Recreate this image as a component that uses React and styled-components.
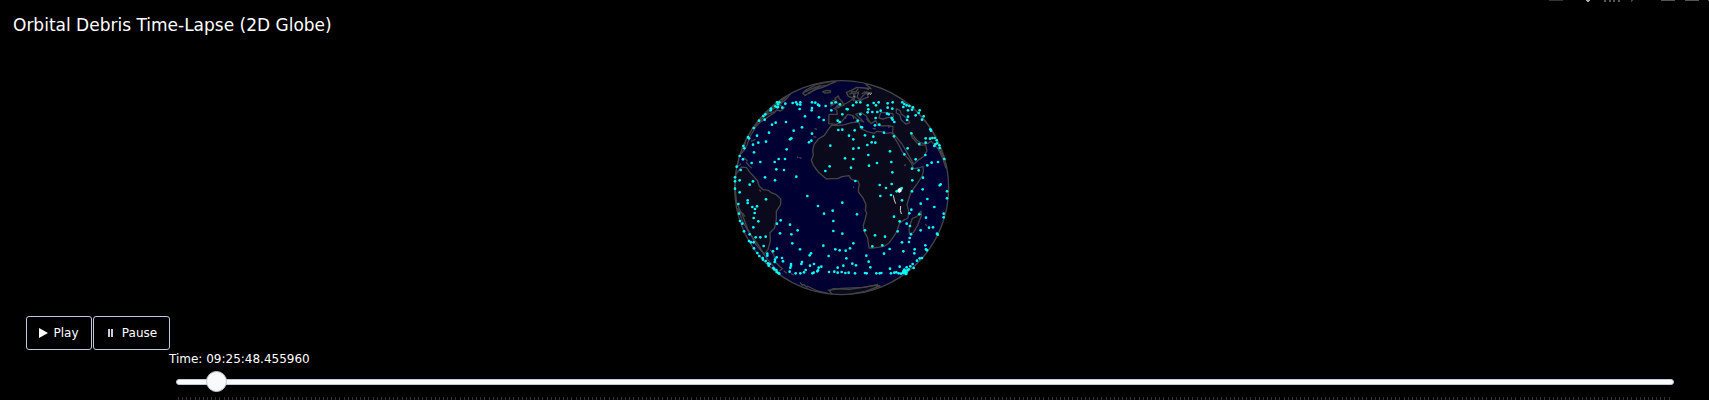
import React, { useState } from "react";
import styled, { createGlobalStyle } from "styled-components";

const GlobalStyle = createGlobalStyle`
  *, *::before, *::after { box-sizing: border-box; }
  body {
    margin: 0;
    background: #000;
    color: #fff;
    font-family: Verdana, "DejaVu Sans", sans-serif;
    overflow: hidden;
  }
`;

const Page = styled.main`
  position: relative;
  display: flex;
  flex-direction: column;
`;

const Title = styled.h1`
  margin: 0;
  padding: 13px 13px 0;
  font-size: 17px;
  line-height: 24px;
  font-weight: 400;
`;

const ModeBar = styled.svg`
  position: absolute;
  top: 0;
  right: 0;
`;

const GlobeArea = styled.section`
  display: flex;
  justify-content: center;
  padding: 41px 26px 0 0;
`;

const Controls = styled.div`
  display: flex;
  gap: 1px;
  padding: 18px 26px 0;
`;

const ControlButton = styled.button`
  display: flex;
  align-items: center;
  justify-content: center;
  gap: ${(p) => (p.$wide ? 9 : 5)}px;
  width: ${(p) => (p.$wide ? 77 : 66)}px;
  height: 34px;
  padding: ${(p) => (p.$wide ? "0 0 0 2px" : "0")};
  border: 1px solid #bec8d9;
  border-radius: 3px;
  background: #000;
  color: #fff;
  font-family: inherit;
  font-size: 12px;
  line-height: 16px;
  cursor: pointer;
`;

const Timeline = styled.div`
  display: flex;
  flex-direction: column;
  padding: 1px 34px 0 169px;
`;

const TimeLabel = styled.label`
  font-size: 12px;
  line-height: 16px;
`;

const Slider = styled.input`
  appearance: none;
  display: block;
  width: auto;
  height: 22px;
  margin: 4px 1px 0 7px;
  background: transparent;
  cursor: pointer;

  &::-webkit-slider-runnable-track {
    height: 6px;
    border: 1px solid #bec8d9;
    border-radius: 3px;
    background: #f8fafc;
  }

  &::-webkit-slider-thumb {
    appearance: none;
    width: 21px;
    height: 21px;
    margin-top: -9px;
    border: 1px solid #bec8d9;
    border-radius: 50%;
    background: #f8fafc;
  }
`;

const Ticks = styled.div`
  display: flex;
  justify-content: space-between;
  height: 3px;
  margin: 4px 3px 0 9px;
`;

const Tick = styled.span`
  width: 1px;
  height: 3px;
  background: #333;
`;

const land = [
  // Africa
  "M302 141 L290 157 L280 172 L262 183 L249 200 L245 218 L247 232 L241 246 L247 262 L262 282 L286 303 L300 302 L320 302 L333 296 L354 293 L360 303 L370 307 L381 309 L385 320 L382 334 L383 343 L396 360 L405 380 L403 398 L407 405 L402 425 L397 442 L398 457 L410 480 L414 510 L425 510 L440 508 L460 505 L475 494 L488 476 L498 460 L505 436 L518 427 L531 420 L533 400 L528 380 L534 360 L540 342 L556 321 L573 295 L577 280 L576 265 L563 270 L548 272 L541 255 L530 240 L514 221 L503 200 L490 178 L483 164 L465 166 L452 161 L438 160 L430 166 L409 161 L390 152 L386 139 L383 132 L362 134 L340 140 L320 143 Z",
  // Eurasia
  "M293 137 L294 109 L319 109 L317 96 L309 91 L323 89 L331 83 L347 75 L356 70 L367 62 L374 68 L390 67 L400 61 L412 57 L408 48 L421 43 L404 46 L396 53 L387 65 L378 58 L383 42 L370 48 L366 60 L352 55 L346 44 L360 37 L378 28 L400 30 L420 32 L400 14 L480 40 L550 90 L593 143 L622 190 L640 240 L632 235 L622 214 L610 200 L600 190 L592 196 L577 196 L566 193 L557 186 L549 176 L540 165 L543 177 L553 189 L565 202 L584 200 L588 218 L580 234 L565 244 L548 259 L535 235 L513 198 L494 175 L485 164 L486 145 L472 143 L457 144 L441 142 L434 128 L426 133 L420 137 L412 125 L406 114 L390 104 L374 109 L389 122 L398 132 L382 126 L366 113 L350 109 L342 119 L330 133 L316 139 Z",
  // South America
  "M24 276 L32 267 L47 269 L55 281 L67 294 L80 309 L85 325 L96 335 L112 337 L121 344 L136 350 L149 363 L149 379 L136 400 L136 424 L131 450 L117 464 L118 490 L111 515 L99 529 L75 500 L50 453 L34 410 L17 376 L12 329 L15 288 Z",
  // North America and Greenland
  "M144 80 L160 89 L149 99 L137 96 L129 105 L115 114 L101 124 L86 134 L75 146 L58 174 L48 201 L38 219 L26 231 L36 205 L60 157 L90 117 L124 84 L177 44 Z",
  "M215 46 L225 36 L254 20 L300 10 L315 11 L287 22 L267 25 L249 35 L236 45 L222 52 Z",
  // Antarctica
  "M303 649 L295 638 L307 632 L355 634 L410 626 L435 622 L447 624 L403 640 L350 650 Z",
  // Madagascar
  "M570 399 L571 413 L560 442 L547 464 L535 466 L534 450 L544 421 L557 416 Z",
  // Iceland, Great Britain and Ireland
  "M275 41 L287 37 L299 39 L297 44 L281 45 Z",
  "M312 61 L322 54 L325 62 L334 71 L338 82 L324 84 L314 88 L323 80 L317 72 Z",
  "M300 72 L310 66 L310 77 L300 84 Z",
];

const seas = [
  "M444 120 L449 104 L466 104 L485 107 L488 117 L469 119 L456 123 Z",
  "M496 92 L506 97 L511 108 L530 123 L536 134 L525 138 L511 126 L507 112 L496 104 Z",
];

const coastDetails = [
  "M60 190 L73 184 M40 239 L50 250 M45 252 L54 263 L62 270 M20 266 L30 257",
  "M85 335 L90 341 M22 399 L35 406 L42 416 M20 390 L35 431 L56 466 L84 504 L106 540 L144 584",
  "M118 515 L128 530 L135 554 L145 564 L154 572 L145 580 M158 578 L167 586 M180 586 L188 592",
  "M207 613 L214 622 L218 620 L230 628 M205 239 L212 241 M250 152 L258 154 M247 176 L256 178 M198 236 L202 239",
  "M66 153 L90 118 L118 98 L130 83 L160 60 L179 39 M120 98 L136 87 L160 69 L180 46 M84 132 L105 111 L130 101",
  "M25 230 L34 212 L44 194 M15 280 L24 242 M624 211 L637 246 L645 271 M630 218 L645 251 L652 290",
  "M340 118 L346 122 M364 111 L369 123 M372 130 L382 132 M406 122 L414 132 M425 151 L434 153 M471 147 L479 146",
  "M231 46 L255 34 L275 28 L292 21 M218 43 L245 31 L269 23 M360 41 L374 42 L382 32 M403 31 L414 35",
  "M355 49 L364 44 L371 51 L373 60 M392 48 L401 42 L414 43 M371 58 L367 70 M525 260 L519 263 M583 439 L588 444",
  "M228 624 L260 639 L302 649 M290 637 L331 631 L398 628 L441 619 M367 326 L369 329",
];

const debris = [
  [138,73],[145,73],[185,75],[195,73],[199,79],[208,73],[208,80],[243,73],[253,74],[261,80],[265,83],[302,75],[314,73],[327,79],[376,73],[388,73],[366,82],[410,82],[412,94],[428,75],[435,82],[443,73],[470,76],[485,73],[484,92],[470,89],[468,107],[485,125],[490,132],[514,73],[520,78],[517,87],[527,82],[535,84],[531,97],[546,88],[543,95],[531,116],[528,126],[554,112],[563,105],[566,97],[578,115],[573,125],
  [141,79],[139,88],[154,89],[163,77],[133,85],[120,92],[119,97],[141,87],[103,109],[97,114],[101,125],[84,128],[134,134],[123,140],[165,132],[206,93],[222,115],[242,97],[243,90],[284,84],[278,126],[264,118],[301,97],[347,93],[350,94],[334,109],[320,128],[326,132],[380,128],[388,109],[410,103],[424,102],[439,102],[449,98],[434,120],[432,142],[445,140],[459,164],[473,109],[482,120],[489,175],
  [68,150],[114,164],[188,158],[213,148],[243,167],[234,193],[241,188],[177,184],[181,181],[167,214],[105,191],[82,194],[66,200],[51,177],[54,181],[78,173],[69,223],[40,211],[37,204],[26,234],[36,244],[62,255],[88,252],[17,266],[29,276],[131,252],[143,243],[162,243],[136,274],[159,276],[102,298],[132,307],[196,296],[66,310],[56,320],[12,298],[12,310],[12,332],[26,343],[26,307],
  [354,173],[322,156],[334,155],[371,157],[390,147],[393,148],[402,172],[427,176],[433,194],[422,193],[409,201],[367,184],[383,210],[367,212],[298,203],[342,241],[367,243],[412,231],[477,220],[481,252],[438,255],[414,263],[360,269],[296,265],[283,279],[484,283],[373,309],[446,321],[465,330],[482,318],[497,340],[512,331],[448,354],[480,351],[513,367],[334,374],[229,354],[261,384],[305,398],[279,407],[378,409],[489,416],[530,211],[520,229],[554,244],[565,198],[584,194],[583,231],[541,166],[589,262],[602,254],[621,252],[640,243],[576,299],[563,277],[543,272],[544,307],[626,322],[629,319],[589,363],[648,340],[648,361],[575,334],[543,340],[569,377],[610,387],[638,407],[638,418],
  [598,154],[600,158],[597,182],[604,180],[611,180],[617,187],[618,196],[625,202],[626,210],[613,199],[610,204],[584,181],[105,364],[50,367],[50,375],[22,378],[64,387],[78,385],[72,393],[24,407],[71,405],[82,430],[68,420],[67,448],[34,437],[27,429],[39,460],[56,469],[74,478],[88,478],[104,476],[54,489],[60,493],[68,493],[98,504],[69,511],[138,437],[149,427],[177,440],[200,457],[147,466],[181,469],[184,496],[207,514],[240,526],[236,532],[277,503],[307,429],[307,459],[334,467],[402,457],[432,472],[424,505],[454,502],[462,476],[313,514],[326,517],[344,518],[367,496],[357,511],[293,534],[406,533],[476,513],[500,460],[513,493],[527,437],[506,430],[535,406],[541,395],[565,409],[537,444],[569,457],[585,419],[594,449],[606,448],[618,467],[536,480],[534,492],[517,520],[551,514],[550,526],[566,541],[573,540],[583,502],[588,517],[585,514],[620,470],[540,469],
  [79,525],[85,534],[95,540],[96,545],[104,549],[109,527],[109,533],[126,520],[138,512],[137,538],[132,545],[131,552],[116,558],[113,563],[111,556],[127,570],[130,574],[136,576],[142,585],[137,582],[145,587],[153,540],[156,550],[180,558],[180,563],[178,569],[176,581],[211,558],[213,552],[194,586],[208,586],[219,583],[224,576],[237,563],[249,558],[244,586],[248,584],[263,569],[261,577],[259,580],[271,566],[294,582],[310,581],[320,584],[332,582],[343,585],[353,584],[337,563],[346,541],[320,569],[364,557],[375,562],[372,586],[402,585],[407,586],[413,551],[418,568],[436,586],[446,586],[451,585],[459,527],[477,572],[480,586],[490,584],[496,583],[506,566],[503,586],[510,587],[516,585],[521,583],[526,583],[529,577],[520,575],[527,568],[533,574],[538,565],[548,570],[545,558],[558,548],[524,588],[517,580],[526,587],[522,578],
];

function Globe() {
  return (
    <svg width="221" height="220" viewBox="0 0 663 660" role="img" aria-label="Globe with orbital debris">
      <defs>
        <clipPath id="sphere">
          <circle cx="332" cy="329" r="321" />
        </clipPath>
      </defs>
      <circle cx="332" cy="329" r="321" fill="#000033" />
      <g clipPath="url(#sphere)" stroke="#444" strokeWidth="4" strokeLinejoin="round">
        {land.map((d) => <path key={d} d={d} fill="#0a0a1c" />)}
        {seas.map((d) => <path key={d} d={d} fill="#000033" />)}
        {coastDetails.map((d) => <path key={d} d={d} fill="none" />)}
      </g>
      <circle cx="332" cy="329" r="321" fill="none" stroke="#444" strokeWidth="4" />
      <path d="M498 337 L504 330 L515 328 L511 341 L504 345 Z" fill="#fff" />
      <path d="M487 352 L490 366 L494 377 M509 384 L508 397 L511 408" fill="none" stroke="#d0d0d0" strokeWidth="3" />
      <path d="M410 49 L416 46 M417 51 L422 45 M368 55 L371 56" stroke="#bbb" strokeWidth="3" />
      <g fill="#00ffff">
        {debris.map(([x, y], i) => <circle key={i} cx={x} cy={y} r="4" />)}
      </g>
    </svg>
  );
}

const STEPS = 360;

export default function App() {
  const [step, setStep] = useState(7);
  return (
    <Page>
      <GlobalStyle />
      <Title>Orbital Debris Time-Lapse (2D Globe)</Title>
      <ModeBar width="192" height="2" viewBox="0 0 192 2" aria-hidden="true">
        <path d="M32 0h14" stroke="#333" strokeWidth="2" />
        <path d="M69 0h4v1h-1v1h-2v-1h-1z" fill="#aaa" />
        <path d="M87 1h2M92 1h2M96 1h2M101 1h2" stroke="#555" strokeWidth="2" />
        <path d="M114 0h2v1h-1v1h-1z" fill="#444" />
        <path d="M144 0h14M168 0h14M191 0h1" stroke="#555" strokeWidth="2" />
      </ModeBar>
      <GlobeArea>
        <Globe />
      </GlobeArea>
      <Controls>
        <ControlButton type="button">
          <svg width="9" height="10" viewBox="0 0 9 10" aria-hidden="true">
            <path d="M0 0L9 5L0 10Z" fill="#fff" />
          </svg>
          Play
        </ControlButton>
        <ControlButton type="button" $wide>
          <svg width="5" height="8" viewBox="0 0 5 8" aria-hidden="true">
            <path d="M0 0h2v8h-2zM3 0h2v8h-2z" fill="#ccd" />
          </svg>
          Pause
        </ControlButton>
      </Controls>
      <Timeline>
        <TimeLabel htmlFor="time">Time: 09:25:48.455960</TimeLabel>
        <Slider
          id="time"
          type="range"
          min="0"
          max={STEPS}
          value={step}
          onChange={(e) => setStep(Number(e.target.value))}
        />
        <Ticks aria-hidden="true">
          {Array.from({ length: STEPS + 1 }, (_, i) => <Tick key={i} />)}
        </Ticks>
      </Timeline>
    </Page>
  );
}
